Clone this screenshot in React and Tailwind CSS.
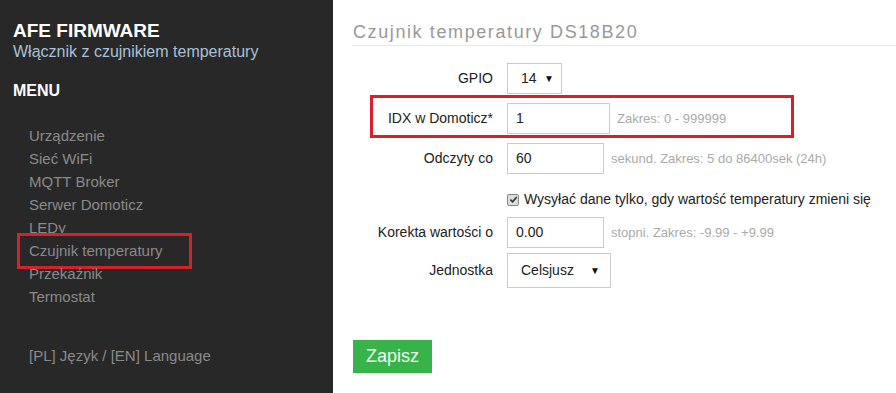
import React from 'react';

const MENU = [
  'Urządzenie',
  'Sieć WiFi',
  'MQTT Broker',
  'Serwer Domoticz',
  'LEDy',
  'Czujnik temperatury',
  'Przekaźnik',
  'Termostat',
];

function Arrow() {
  return <span className="text-[10px] leading-none text-[#111]">▼</span>;
}

function Row({ label, children, hint, className = '' }) {
  return (
    <div className={`flex items-center ${className}`}>
      <div className="w-[140px] text-right text-[14px] text-[#222]">{label}</div>
      <div className="ml-[14px] flex items-center">
        {children}
        {hint && <span className="ml-[7px] text-[13px] text-[#aaa]">{hint}</span>}
      </div>
    </div>
  );
}

function TextInput({ value, width }) {
  return (
    <div
      className={`flex h-[31px] items-center border border-[#ccc] bg-white pl-[8px] text-[14px] text-[#222] ${width}`}
    >
      {value}
    </div>
  );
}

export default function App() {
  return (
    <div
      className="flex h-[393px] w-[896px] overflow-hidden bg-white"
      style={{ fontFamily: '"Liberation Sans", Arial, sans-serif' }}
    >
      {/* sidebar */}
      <aside className="relative w-[333px] shrink-0 bg-[#282828] pl-[13px] pt-[20px]">
        <div className="text-[19px] font-bold leading-[22px] text-white">AFE FIRMWARE</div>
        <div className="text-[16px] leading-[19px] text-[#a9c0d6]">
          Włącznik z czujnikiem temperatury
        </div>
        <div className="mt-[20px] text-[16px] font-bold leading-[19px] text-white">MENU</div>
        <ul className="mt-[24px] pl-[16px]">
          {MENU.map((item) => (
            <li key={item} className="relative text-[15px] leading-[23px] text-[#8a8a8a]">
              {item}
              {item === 'Czujnik temperatury' && (
                <span className="absolute left-[-12px] top-[-6px] h-[36px] w-[175px] border-[3px] border-[#d8202b]" />
              )}
            </li>
          ))}
        </ul>
        <div className="mt-[36px] pl-[16px] text-[15px] leading-[23px] text-[#8a8a8a]">
          [PL] Język / [EN] Language
        </div>
      </aside>

      {/* content */}
      <main className="flex-1 pl-[20px] pt-[22px]">
        <h2 className="border-b border-[#e6e6e6] pb-[3px] text-[18px] leading-[20px] tracking-[1.6px] text-[#999]">
          Czujnik temperatury DS18B20
        </h2>

        <div className="mt-[17px]">
          <Row label="GPIO">
            <div className="flex h-[31px] w-[55px] items-center justify-between border border-[#ccc] pl-[13px] pr-[7px] text-[14px] text-[#222]">
              14 <Arrow />
            </div>
          </Row>

          <div className="relative mt-[9px]">
            <Row label="IDX w Domoticz*" hint="Zakres: 0 - 999999">
              <TextInput value="1" width="w-[103px]" />
            </Row>
            <span className="absolute left-[17px] top-[-8px] h-[43px] w-[424px] border-[3px] border-[#d8202b]" />
          </div>

          <Row label="Odczyty co" hint="sekund. Zakres: 5 do 86400sek (24h)" className="mt-[9px]">
            <TextInput value="60" width="w-[97px]" />
          </Row>

          <div className="ml-[154px] mt-[10px] flex h-[31px] items-center text-[14px] text-[#222]">
            <span className="flex h-[12px] w-[12px] items-center justify-center rounded-[2px] border border-[#888] bg-[#dcdcdc]">
              <svg viewBox="0 0 10 10" className="h-[9px] w-[9px]">
                <path d="M1.5 5.2 L4 7.6 L8.6 2.2" fill="none" stroke="#333" strokeWidth="1.8" />
              </svg>
            </span>
            <span className="ml-[5px]">Wysyłać dane tylko, gdy wartość temperatury zmieni się</span>
          </div>

          <Row label="Korekta wartości o" hint="stopni. Zakres: -9.99 - +9.99" className="mt-[2px]">
            <TextInput value="0.00" width="w-[97px]" />
          </Row>

          <Row label="Jednostka" className="mt-[5px]">
            <div className="flex h-[35px] w-[104px] items-center justify-between border border-[#ccc] pl-[13px] pr-[10px] text-[14px] text-[#222]">
              Celsjusz <Arrow />
            </div>
          </Row>
        </div>

        <button className="mt-[52px] h-[33px] w-[79px] bg-[#37b34a] text-[18px] text-[#f2fff2]">
          Zapisz
        </button>
      </main>
    </div>
  );
}
